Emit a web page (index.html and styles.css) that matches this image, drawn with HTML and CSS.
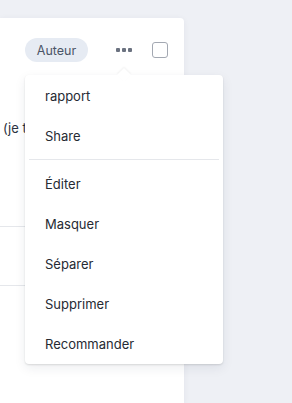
FILE: index.html
```html
<!DOCTYPE html>
<html lang="fr">
<head>
  <meta charset="UTF-8">
  <meta name="viewport" content="width=device-width, initial-scale=1.0">
  <title>Message</title>
  <link rel="stylesheet" href="styles.css">
</head>
<body>
  <div class="page">
    <div class="card">
      <div class="card-head">
        <span class="badge">Auteur</span>
        <button class="more" aria-label="Plus">
          <span></span><span></span><span></span>
        </button>
        <span class="check"></span>
      </div>
      <p class="card-text">(je t'aime bien)</p>
      <div class="row row-first"></div>
      <div class="row"></div>
    </div>

    <!-- menu ouvert sous le bouton "..." -->
    <div class="menu">
      <div class="menu-item">rapport</div>
      <div class="menu-item">Share</div>
      <div class="menu-sep"></div>
      <div class="menu-item">Éditer</div>
      <div class="menu-item">Masquer</div>
      <div class="menu-item">Séparer</div>
      <div class="menu-item">Supprimer</div>
      <div class="menu-item">Recommander</div>
    </div>
  </div>
</body>
</html>
```

FILE: styles.css
```css
body {
  margin: 0;
  background-color: #eef0f5;
  font-family: Inter, "Noto Sans", sans-serif;
  overflow: hidden;
}

.page {
  position: relative;
  height: 403px;
  padding-top: 18px;
  box-sizing: border-box;
}

.card {
  width: 184px;
  height: 385px;
  background-color: #fff;
  border-radius: 0 4px 0 0;
  box-shadow: 0 1px 6px rgba(30, 40, 70, 0.06);
  overflow: hidden;
}

.card-head {
  display: flex;
  align-items: center;
  height: 24px;
  padding: 20px 0 0 25px;
}

.badge {
  display: flex;
  align-items: center;
  justify-content: center;
  width: 63px;
  height: 24px;
  border-radius: 12px;
  background-color: #e6ebf3;
  color: #4b5567;
  font-size: 12.5px;
}

.more {
  display: flex;
  gap: 2px;
  margin-left: 28px;
  padding: 0;
  border: none;
  background: none;
}

.more span {
  width: 4px;
  height: 4px;
  background-color: #6b7280;
  border-radius: 1px;
}

.check {
  width: 14px;
  height: 14px;
  margin-left: 20px;
  border: 1px solid #a3a8b2;
  border-radius: 3px;
}

.card-text {
  margin: 58px 0 0 3px;
  line-height: 16px;
  font-size: 13px;
  color: #2c3340;
  white-space: nowrap;
}

.row {
  height: 58px;
  border-bottom: 1px solid #e5e7eb;
}

.row-first {
  height: 90px;
}

.menu {
  position: absolute;
  top: 75px;
  left: 25px;
  width: 198px;
  padding-top: 1px;
  background-color: #fff;
  border-radius: 4px;
  box-shadow: 0 1px 2px rgba(0, 0, 0, 0.12), 0 4px 12px rgba(30, 40, 70, 0.08);
}

.menu::before {
  content: "";
  position: absolute;
  top: -5px;
  left: 94px;
  width: 10px;
  height: 10px;
  background-color: #fff;
  transform: rotate(45deg);
  box-shadow: -1px -1px 2px rgba(0, 0, 0, 0.05);
}

.menu-item {
  position: relative;
  display: flex;
  align-items: center;
  height: 40px;
  padding-left: 20px;
  font-size: 13px;
  color: #262a33;
}

.menu-sep {
  height: 1px;
  margin: 3px 4px 4px;
  background-color: #e5e7eb;
}
```
